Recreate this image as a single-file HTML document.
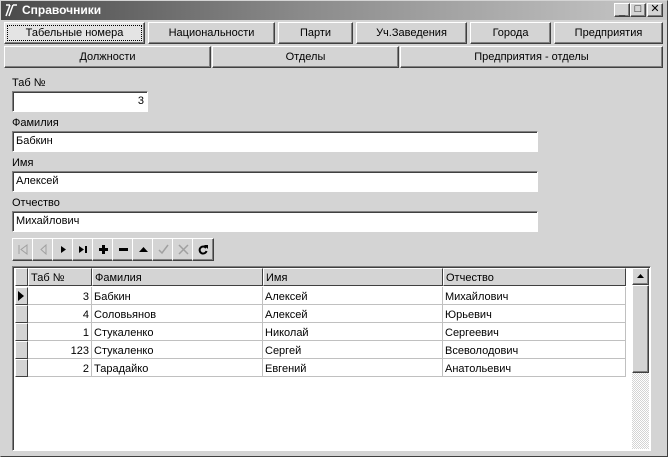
<!DOCTYPE html>
<html><head><meta charset="utf-8"><style>
*{box-sizing:border-box;margin:0;padding:0}
body{width:668px;height:457px;background:#d4d4d4;font-family:"Liberation Sans","DejaVu Sans",sans-serif;font-size:11px;color:#000;position:relative;overflow:hidden}
.a{position:absolute}
.title{left:0;top:0;width:668px;height:20px;background:linear-gradient(90deg,#4a4a4a 0%,#8a8a8a 45%,#c8c8c8 100%);color:#fff;font-weight:bold;font-size:12px;line-height:20px;padding-left:22px}
.btn{position:absolute;background:#d4d4d4;border:1px solid;border-color:#fff #404040 #404040 #fff;box-shadow:inset -1px -1px 0 #808080;text-align:center;font-size:11px}
.tb{height:22px;line-height:20px}
.cap{width:16px;height:14px;top:3px;font-size:11px;line-height:11px;font-weight:bold}
.lbl{position:absolute;font-size:11px}
.ed{position:absolute;background:#fff;border:1px solid;border-color:#808080 #fff #fff #808080;box-shadow:inset 1px 1px 0 #404040;height:21px;line-height:19px;padding:0 3px;font-size:11px}
.nb{position:absolute;top:238px;width:22px;height:23px;background:#d4d4d4;border:1px solid;border-color:#fff #404040 #404040 #fff;box-shadow:inset -1px -1px 0 #808080}
.nb svg{position:absolute;left:5px;top:5px}
.grid{left:12px;top:266px;width:639px;height:185px;background:#fff;border:1px solid;border-color:#808080 #fff #fff #808080;box-shadow:inset 1px 1px 0 #404040}
.row{position:absolute;left:15px;height:18px;font-size:11px;line-height:20px;white-space:nowrap}
.row div{position:absolute;top:0;height:18px;padding:0 2px;overflow:hidden}
.c{border-right:1px solid #c0c0c0;border-bottom:1px solid #c0c0c0}
.h{background:#d4d4d4;border:1px solid;border-color:#fff #404040 #404040 #fff;line-height:18px}
.r{text-align:right}
</style></head><body>
<div class="a title">Справочники</div>
<svg class="a" style="left:4px;top:3px" width="14" height="14"><path d="M2 13L6 2M5 13L9 2M9 2h4M6 2H2" stroke="#fff" stroke-width="1.5" fill="none"/></svg>
<div class="btn cap" style="left:614px;line-height:14px">_</div>
<div class="btn cap" style="left:630px;width:16px">□</div>
<div class="btn cap" style="left:647px">✕</div>
<div class="a" style="left:0;top:0;width:668px;height:457px;border:1px solid;border-color:#d4d4d4 #404040 #404040 #d4d4d4;pointer-events:none"></div>

<div class="btn tb" style="left:4px;top:22px;width:141px;outline:1px dotted #000;outline-offset:-4px;background:#e4e4e4">Табельные номера</div>
<div class="btn tb" style="left:148px;top:22px;width:127px">Национальности</div>
<div class="btn tb" style="left:278px;top:22px;width:75px">Парти</div>
<div class="btn tb" style="left:356px;top:22px;width:111px">Уч.Заведения</div>
<div class="btn tb" style="left:470px;top:22px;width:81px">Города</div>
<div class="btn tb" style="left:554px;top:22px;width:109px">Предприятия</div>
<div class="btn tb" style="left:4px;top:46px;width:207px">Должности</div>
<div class="btn tb" style="left:212px;top:46px;width:187px">Отделы</div>
<div class="btn tb" style="left:400px;top:46px;width:263px">Предприятия - отделы</div>

<div class="lbl" style="left:12px;top:77px">Таб №</div>
<div class="ed" style="left:12px;top:91px;width:136px;text-align:right">3</div>
<div class="lbl" style="left:12px;top:117px">Фамилия</div>
<div class="ed" style="left:12px;top:131px;width:526px">Бабкин</div>
<div class="lbl" style="left:12px;top:157px">Имя</div>
<div class="ed" style="left:12px;top:171px;width:526px">Алексей</div>
<div class="lbl" style="left:12px;top:197px">Отчество</div>
<div class="ed" style="left:12px;top:211px;width:526px">Михайлович</div>

<div class="nb" style="left:12px"><svg width="11" height="11"><path d="M1 1v9M9 1L3 5.5 9 10z" stroke="#a0a0a0" fill="none"/></svg></div>
<div class="nb" style="left:32px"><svg width="11" height="11"><path d="M8 1L3 5.5 8 10z" stroke="#a0a0a0" fill="none"/></svg></div>
<div class="nb" style="left:52px"><svg width="11" height="11"><path d="M3 2l5 3.5L3 9z" fill="#000"/></svg></div>
<div class="nb" style="left:72px"><svg width="11" height="11"><path d="M1 2l5 3.5L1 9z" fill="#000"/><rect x="7" y="2" width="2" height="7"/></svg></div>
<div class="nb" style="left:92px"><svg width="11" height="11"><path d="M1 4h9v3H1zM4 1h3v9H4z"/></svg></div>
<div class="nb" style="left:112px"><svg width="11" height="11"><rect x="1" y="4" width="9" height="3"/></svg></div>
<div class="nb" style="left:132px"><svg width="11" height="11"><path d="M1 8l4.5-5 4.5 5z"/></svg></div>
<div class="nb" style="left:152px"><svg width="11" height="11"><path d="M1 6l3 3 6-8" stroke="#a0a0a0" fill="none" stroke-width="1.5"/></svg></div>
<div class="nb" style="left:172px"><svg width="11" height="11"><path d="M1 1l9 9M10 1l-9 9" stroke="#a0a0a0" fill="none" stroke-width="1.5"/></svg></div>
<div class="nb" style="left:192px"><svg width="11" height="11"><path d="M8 4A3.5 3.5 0 1 0 8.5 7" stroke="#000" fill="none" stroke-width="2"/><path d="M6 1l4 0 0 4z"/></svg></div>

<div class="a grid"></div>
<div class="row" style="top:268px"><div class="h" style="left:0;width:13px"></div><div class="h" style="left:13px;width:64px">Таб №</div><div class="h" style="left:77px;width:171px">Фамилия</div><div class="h" style="left:248px;width:180px">Имя</div><div class="h" style="left:428px;width:183px">Отчество</div></div>
<div class="row" style="top:287px"><div class="h" style="left:0;width:13px;padding:0"><svg width="11" height="16" style="display:block"><path d="M2 3l6 5-6 5z"/></svg></div><div class="c r" style="left:13px;width:64px">3</div><div class="c" style="left:77px;width:171px">Бабкин</div><div class="c" style="left:248px;width:180px">Алексей</div><div class="c" style="left:428px;width:183px">Михайлович</div></div>
<div class="row" style="top:305px"><div class="h" style="left:0;width:13px"></div><div class="c r" style="left:13px;width:64px">4</div><div class="c" style="left:77px;width:171px">Соловьянов</div><div class="c" style="left:248px;width:180px">Алексей</div><div class="c" style="left:428px;width:183px">Юрьевич</div></div>
<div class="row" style="top:323px"><div class="h" style="left:0;width:13px"></div><div class="c r" style="left:13px;width:64px">1</div><div class="c" style="left:77px;width:171px">Стукаленко</div><div class="c" style="left:248px;width:180px">Николай</div><div class="c" style="left:428px;width:183px">Сергеевич</div></div>
<div class="row" style="top:341px"><div class="h" style="left:0;width:13px"></div><div class="c r" style="left:13px;width:64px">123</div><div class="c" style="left:77px;width:171px">Стукаленко</div><div class="c" style="left:248px;width:180px">Сергей</div><div class="c" style="left:428px;width:183px">Всеволодович</div></div>
<div class="row" style="top:359px"><div class="h" style="left:0;width:13px"></div><div class="c r" style="left:13px;width:64px">2</div><div class="c" style="left:77px;width:171px">Тарадайко</div><div class="c" style="left:248px;width:180px">Евгений</div><div class="c" style="left:428px;width:183px">Анатольевич</div></div>
<div class="a" style="left:632px;top:268px;width:17px;height:181px;background:repeating-conic-gradient(#fff 0 25%,#d4d4d4 0 50%) 0 0/2px 2px"></div>
<div class="btn" style="left:632px;top:268px;width:17px;height:17px"><svg width="15" height="15" style="position:absolute;left:0;top:0"><path d="M4 9l3.5-4 3.5 4z"/></svg></div>
<div class="btn" style="left:632px;top:285px;width:17px;height:88px"></div>
</body></html>
